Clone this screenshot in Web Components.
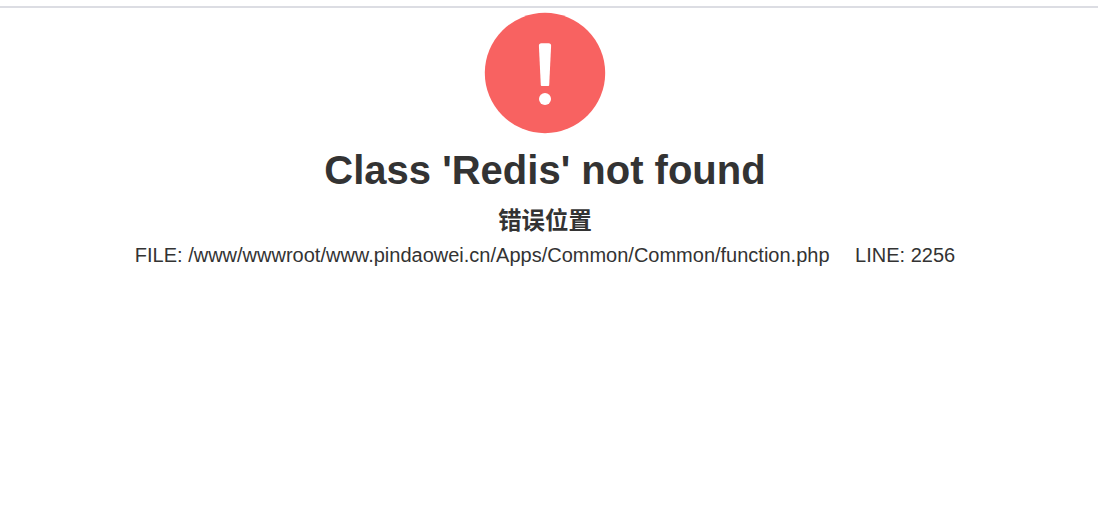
<!DOCTYPE html>
<html lang="zh-CN">
<head>
    <meta charset="UTF-8">
    <title>Error</title>
    <style>
        body{
            margin: 0;
            background: #fff;
            color: #333;
            font-family: "Liberation Sans", Arial, "Noto Sans CJK SC", sans-serif;
        }
    </style>
</head>
<body>

<template id="alert-icon-template">
    <style>
        :host{display: block; width: 122px; height: 122px;}
        svg{display: block;}
    </style>
    <svg width="122" height="122" viewBox="0 0 122 122" aria-hidden="true">
        <circle cx="61" cy="61" r="60.2" fill="#f86261"/>
        <path d="M57.4 31.3h7.2Q67.2 31.3 67.1 33.8L65.2 73.2Q65.1 74 64.3 74h-6.6Q56.9 74 56.8 73.2L54.9 33.8Q54.8 31.3 57.4 31.3z" fill="#fff"/>
        <circle cx="61" cy="87" r="6" fill="#fff"/>
    </svg>
</template>

<template id="error-page-template">
    <style>
        :host{
            display: flex;
            flex-direction: column;
            align-items: center;
            border-top: 2px solid #dcdde3;
            margin-top: 6px;
            padding: 4px 8px 0 0;
        }
        h1{
            margin: 12px 0 0;
            font-size: 40px;
            line-height: 48px;
        }
        h3{
            margin: 13px 0 0;
            font-size: 23.4px;
            line-height: 28px;
        }
        p{
            margin: 7px 0 0;
            font-size: 20px;
            line-height: 26px;
            white-space: nowrap;
        }
    </style>
    <alert-icon></alert-icon>
    <h1><slot name="message"></slot></h1>
    <h3><slot name="label"></slot></h3>
    <p><slot name="location"></slot></p>
</template>

<error-page>
    <span slot="message">Class 'Redis' not found</span>
    <span slot="label">错误位置</span>
    <span slot="location">FILE: /www/wwwroot/www.pindaowei.cn/Apps/Common/Common/function.php &#12288;LINE: 2256</span>
</error-page>

<script>
    function define(name) {
        customElements.define(name,
            class extends HTMLElement {
                constructor() {
                    super();
                    const template = document
                        .getElementById(name + '-template')
                        .content;
                    this.attachShadow({mode: 'open'})
                        .appendChild(template.cloneNode(true));
                }
            })
    }

    define('alert-icon');
    define('error-page');
</script>
</body>
</html>
